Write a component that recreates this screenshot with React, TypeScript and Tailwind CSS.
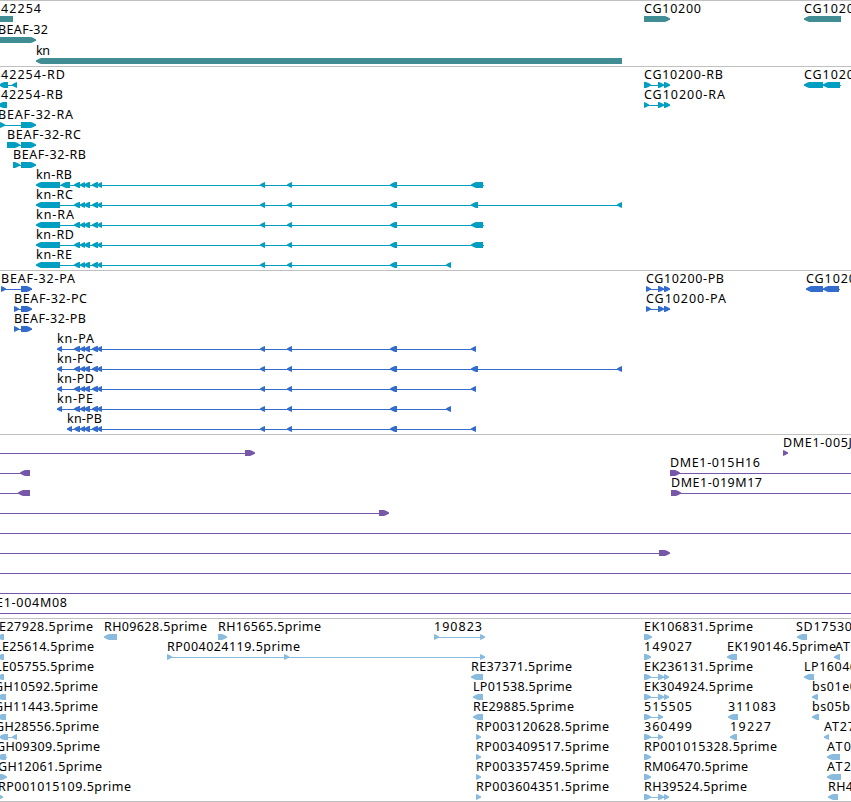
type Direction = "left" | "right" | "none";

// start, end
type Exon = [number, number];

interface Feature {
  row: number;
  dir: Direction;
  exons: Exon[];
  // extent of the thin connecting line, defaults to the exons
  span?: Exon;
}

// row, text, x, width
type Label = [number, string, number, number];

interface TrackProps {
  name: string;
  height: number;
  pitch?: number;
  color: string;
  features: Feature[];
  labels: Label[];
}

const WIDTH = 851;

const exonPath = ([start, end]: Exon, dir: Direction, y: number) => {
  const head = Math.min(5, end - start);
  if (dir === "none") {
    return `M${start} ${y}H${end}V${y + 6}H${start}Z`;
  }
  // heads bulge a little between the shoulder and the tip
  if (dir === "right") {
    return `M${start} ${y}H${end - head}L${end - head / 2} ${y + 1}L${end} ${y + 2.5}V${y + 3.5}L${end - head / 2} ${y + 5}L${end - head} ${y + 6}H${start}Z`;
  }
  return `M${end} ${y}H${start + head}L${start + head / 2} ${y + 1}L${start} ${y + 2.5}V${y + 3.5}L${start + head / 2} ${y + 5}L${start + head} ${y + 6}H${end}Z`;
};

function Track({
  name,
  height,
  pitch = 20,
  color,
  features,
  labels,
}: TrackProps) {
  return (
    <section aria-label={name} className="border-t border-[#c0c0c0]">
      <svg width={WIDTH} height={height} className={`block ${color}`}>
        {features.map(({ row, dir, exons, span }, i) => {
          const y = 15 + row * pitch;
          const from = span ? span[0] : exons[0][0];
          const to = span ? span[1] : exons[exons.length - 1][1];
          return (
            <g key={i} fill="currentColor">
              <rect
                x={from}
                y={y + 3}
                width={to - from}
                height={1}
                shapeRendering="crispEdges"
              />
              {exons.map((exon) => (
                <path key={exon[0]} d={exonPath(exon, dir, y)} />
              ))}
            </g>
          );
        })}
        {labels.map(([row, text, x, width]) => (
          <text
            key={`${row}-${x}`}
            x={x}
            y={12 + row * pitch}
            textLength={width}
            className="fill-black font-['Noto_Sans',sans-serif] text-[12.5px]"
          >
            {text}
          </text>
        ))}
      </svg>
    </section>
  );
}

const geneFeatures: Feature[] = [
  { row: 0, dir: "none", exons: [[0, 13]] },
  { row: 1, dir: "right", exons: [[-5, 36]] },
  { row: 2, dir: "left", exons: [[36, 622]] },
  { row: 0, dir: "right", exons: [[644, 670]] },
  { row: 0, dir: "left", exons: [[804, 841]] },
];

const geneLabels: Label[] = [
  [0, "42254", 1, 40],
  [1, "BEAF-32", -2, 50],
  [2, "kn", 36, 14],
  [0, "CG10200", 644, 57],
  [0, "CG1020", 804, 50],
];

// exons shared by every kn transcript
const knCore: Exon[] = [
  [74, 80],
  [80, 85],
  [84, 90],
  [92, 98],
  [97, 102],
  [260, 265],
  [287, 292],
  [390, 397],
];

const transcriptFeatures: Feature[] = [
  { row: 0, dir: "left", exons: [[-1, 8], [12, 17]] },
  { row: 1, dir: "left", exons: [[-2, 7]] },
  { row: 2, dir: "right", exons: [[-1, 5], [21, 36]] },
  { row: 3, dir: "right", exons: [[7, 20], [21, 36]] },
  { row: 4, dir: "right", exons: [[13, 20], [21, 36]] },
  { row: 5, dir: "left", exons: [[36, 60], [61, 70], ...knCore, [471, 483]], span: [36, 484] },
  { row: 6, dir: "left", exons: [[36, 60], ...knCore, [471, 478], [617, 622]] },
  { row: 7, dir: "left", exons: [[36, 60], ...knCore, [471, 483]], span: [36, 484] },
  { row: 8, dir: "left", exons: [[36, 60], ...knCore, [471, 483]], span: [36, 484] },
  { row: 9, dir: "left", exons: [[36, 60], ...knCore, [446, 451]] },
  { row: 0, dir: "right", exons: [[644, 651], [658, 664], [664, 670]] },
  { row: 1, dir: "right", exons: [[644, 649], [658, 664], [664, 670]] },
  { row: 0, dir: "left", exons: [[804, 823], [823, 840]], span: [804, 841] },
];

const transcriptLabels: Label[] = [
  [0, "42254-RD", 1, 64],
  [1, "42254-RB", 1, 62],
  [2, "BEAF-32-RA", -2, 75],
  [3, "BEAF-32-RC", 7, 74],
  [4, "BEAF-32-RB", 13, 73],
  [5, "kn-RB", 36, 36],
  [6, "kn-RC", 36, 37],
  [7, "kn-RA", 36, 38],
  [8, "kn-RD", 36, 38],
  [9, "kn-RE", 36, 36],
  [0, "CG10200-RB", 644, 79],
  [1, "CG10200-RA", 644, 81],
  [0, "CG1020", 804, 50],
];

const proteinFeatures: Feature[] = [
  { row: 0, dir: "right", exons: [[1, 6], [21, 32]] },
  { row: 1, dir: "right", exons: [[14, 19], [21, 32]] },
  { row: 2, dir: "right", exons: [[14, 19], [21, 32]] },
  { row: 3, dir: "left", exons: [[57, 62], ...knCore, [471, 476]] },
  { row: 4, dir: "left", exons: [[57, 62], ...knCore, [471, 478], [617, 622]] },
  { row: 5, dir: "left", exons: [[57, 62], ...knCore, [471, 476]] },
  { row: 6, dir: "left", exons: [[57, 62], ...knCore, [446, 451]] },
  { row: 7, dir: "left", exons: [[67, 72], ...knCore, [471, 476]] },
  { row: 0, dir: "right", exons: [[646, 651], [658, 664], [664, 670]] },
  { row: 1, dir: "right", exons: [[646, 651], [658, 664], [664, 670]] },
  { row: 0, dir: "left", exons: [[806, 823], [823, 839]], span: [806, 840] },
];

const proteinLabels: Label[] = [
  [0, "BEAF-32-PA", 1, 74],
  [1, "BEAF-32-PC", 14, 73],
  [2, "BEAF-32-PB", 14, 72],
  [3, "kn-PA", 57, 37],
  [4, "kn-PC", 57, 36],
  [5, "kn-PD", 57, 37],
  [6, "kn-PE", 57, 36],
  [7, "kn-PB", 67, 35],
  [0, "CG10200-PB", 646, 78],
  [1, "CG10200-PA", 646, 80],
  [0, "CG1020", 806, 50],
];

const cloneFeatures: Feature[] = [
  { row: 0, dir: "right", exons: [[245, 255]], span: [0, 255] },
  { row: 0, dir: "right", exons: [[783, 788]] },
  { row: 1, dir: "left", exons: [[20, 30]], span: [0, 30] },
  { row: 1, dir: "right", exons: [[670, 680]], span: [670, WIDTH] },
  { row: 2, dir: "left", exons: [[18, 30]], span: [0, 30] },
  { row: 2, dir: "right", exons: [[671, 681]], span: [671, WIDTH] },
  { row: 3, dir: "right", exons: [[379, 389]], span: [0, 389] },
  { row: 4, dir: "none", exons: [], span: [0, WIDTH] },
  { row: 5, dir: "right", exons: [[659, 670]], span: [0, 670] },
  { row: 6, dir: "none", exons: [], span: [0, WIDTH] },
  { row: 7, dir: "none", exons: [], span: [0, WIDTH] },
  { row: 8, dir: "none", exons: [], span: [0, WIDTH] },
];

const cloneLabels: Label[] = [
  [0, "DME1-005J", 783, 69],
  [1, "DME1-015H16", 670, 90],
  [2, "DME1-019M17", 671, 91],
  [8, "E1-004M08", -4, 71],
];

const estFeatures: Feature[] = [
  { row: 0, dir: "left", exons: [[-3, 4]] },
  { row: 1, dir: "left", exons: [[-3, 4]] },
  { row: 2, dir: "left", exons: [[-3, 4]] },
  { row: 3, dir: "left", exons: [[-3, 6]] },
  { row: 4, dir: "left", exons: [[-3, 6]] },
  { row: 5, dir: "left", exons: [[-1, 8], [12, 17]] },
  { row: 6, dir: "left", exons: [[-3, 6]], span: [0, 7] },
  { row: 7, dir: "right", exons: [[-3, 7]] },
  { row: 8, dir: "right", exons: [[-3, 3]] },
  { row: 0, dir: "left", exons: [[104, 117]] },
  { row: 0, dir: "right", exons: [[218, 227]] },
  { row: 0, dir: "right", exons: [[434, 439], [480, 485]] },
  { row: 1, dir: "right", exons: [[167, 172], [284, 289], [480, 485]] },
  { row: 2, dir: "left", exons: [[471, 483]] },
  { row: 3, dir: "left", exons: [[473, 483]] },
  { row: 4, dir: "left", exons: [[473, 483]] },
  { row: 5, dir: "right", exons: [[476, 481]] },
  { row: 6, dir: "right", exons: [[476, 481]] },
  { row: 7, dir: "right", exons: [[476, 481]] },
  { row: 8, dir: "right", exons: [[476, 481]] },
  { row: 0, dir: "right", exons: [[644, 652]] },
  { row: 1, dir: "right", exons: [[644, 651]] },
  { row: 2, dir: "right", exons: [[644, 651], [658, 664], [664, 669]] },
  { row: 3, dir: "right", exons: [[644, 651], [658, 664], [664, 669]] },
  { row: 4, dir: "right", exons: [[644, 651], [658, 663]] },
  { row: 5, dir: "right", exons: [[644, 651], [658, 663]] },
  { row: 6, dir: "right", exons: [[644, 651]] },
  { row: 7, dir: "right", exons: [[644, 651]] },
  { row: 8, dir: "right", exons: [[644, 651], [658, 664], [664, 669]] },
  { row: 1, dir: "left", exons: [[727, 737]] },
  { row: 4, dir: "left", exons: [[728, 738]] },
  { row: 5, dir: "left", exons: [[730, 737]] },
  { row: 0, dir: "left", exons: [[797, 807]] },
  { row: 1, dir: "left", exons: [[834, 840]] },
  { row: 2, dir: "left", exons: [[804, 814]] },
  { row: 3, dir: "left", exons: [[812, 818]] },
  { row: 4, dir: "left", exons: [[812, 819]] },
  { row: 5, dir: "left", exons: [[824, 829]] },
  { row: 6, dir: "left", exons: [[827, 840]] },
  { row: 7, dir: "left", exons: [[827, 841]] },
  { row: 8, dir: "left", exons: [[828, 838]] },
];

const estLabels: Label[] = [
  [0, "E27928.5prime", -1, 94],
  [1, "LE25614.5prime", -5, 99],
  [2, "LE05755.5prime", -5, 99],
  [3, "GH10592.5prime", -6, 104],
  [4, "GH11443.5prime", -6, 104],
  [5, "GH28556.5prime", -5, 104],
  [6, "GH09309.5prime", -4, 104],
  [7, "GH12061.5prime", -2, 104],
  [8, "RP001015109.5prime", -2, 133],
  [0, "RH09628.5prime", 104, 103],
  [1, "RP004024119.5prime", 167, 133],
  [0, "RH16565.5prime", 218, 103],
  [0, "190823", 434, 48],
  [2, "RE37371.5prime", 471, 101],
  [3, "LP01538.5prime", 473, 99],
  [4, "RE29885.5prime", 473, 101],
  [5, "RP003120628.5prime", 476, 133],
  [6, "RP003409517.5prime", 476, 133],
  [7, "RP003357459.5prime", 476, 133],
  [8, "RP003604351.5prime", 476, 133],
  [0, "EK106831.5prime", 644, 109],
  [1, "149027", 644, 48],
  [2, "EK236131.5prime", 644, 109],
  [3, "EK304924.5prime", 644, 109],
  [4, "515505", 644, 48],
  [5, "360499", 644, 48],
  [6, "RP001015328.5prime", 644, 133],
  [7, "RM06470.5prime", 644, 104],
  [8, "RH39524.5prime", 644, 103],
  [1, "EK190146.5prime", 727, 109],
  [4, "311083", 728, 48],
  [5, "19227", 730, 41],
  [0, "SD17530", 796, 56],
  [1, "AT", 835, 15],
  [2, "LP16046", 804, 53],
  [3, "bs01e0", 812, 45],
  [4, "bs05b", 812, 38],
  [5, "AT27", 824, 31],
  [6, "AT0", 827, 24],
  [7, "AT2", 827, 24],
  [8, "RH4", 828, 25],
];

export default function App() {
  return (
    <main className="flex h-[802px] w-[851px] flex-col overflow-hidden border-b border-[#c0c0c0] bg-white">
      <Track
        name="Genes"
        height={65}
        pitch={21}
        color="text-[#408d93]"
        features={geneFeatures}
        labels={geneLabels}
      />
      <Track
        name="Transcripts"
        height={203}
        color="text-[#009fc1]"
        features={transcriptFeatures}
        labels={transcriptLabels}
      />
      <Track
        name="Proteins"
        height={163}
        color="text-[#336ccd]"
        features={proteinFeatures}
        labels={proteinLabels}
      />
      <Track
        name="Clones"
        height={183}
        color="text-[#7758a8]"
        features={cloneFeatures}
        labels={cloneLabels}
      />
      <Track
        name="ESTs"
        height={182}
        color="text-[#88bbdd]"
        features={estFeatures}
        labels={estLabels}
      />
    </main>
  );
}
